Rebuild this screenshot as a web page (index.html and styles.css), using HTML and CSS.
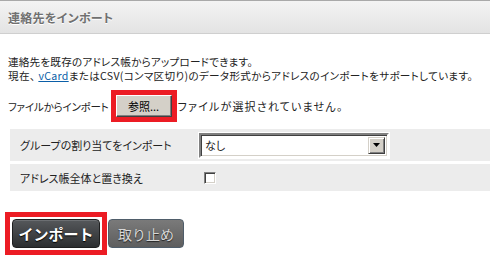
FILE: index.html
```html
<!DOCTYPE html>
<html lang="ja">
<head>
  <meta charset="UTF-8" />
  <title>連絡先をインポート</title>
  <link rel="stylesheet" href="styles.css">
</head>
<body>

<header class="dlg-title"><h1>連絡先をインポート</h1></header>

<!-- intro -->
<div class="intro">
  <p>連絡先を既存のアドレス帳からアップロードできます。</p>
  <p>現在、<a href="#">vCard</a>またはCSV(コンマ区切り)のデータ形式からアドレスのインポートをサポートしています。</p>
</div>

<!-- file picker -->
<div class="file-row">
  <span class="file-label">ファイルからインポート</span>
  <span class="mark"><button class="btn-classic">参照...</button></span>
  <span class="file-none">ファイルが選択されていません。</span>
</div>

<!-- options -->
<div class="opts">
  <div class="opt opt-group">
    <span class="opt-label">グループの割り当てをインポート</span>
    <div class="select-box">
      <span class="select-val">なし</span>
      <span class="select-arrow">
        <svg width="7" height="4" viewBox="0 0 7 4"><path d="M0 0h7L3.5 4z" fill="#000"/></svg>
      </span>
    </div>
  </div>
  <div class="opt opt-replace">
    <span class="opt-label">アドレス帳全体と置き換え</span>
    <input type="checkbox" class="chk">
  </div>
</div>

<!-- actions -->
<div class="actions">
  <span class="mark mark-pad"><button class="btn btn-main">インポート</button></span>
  <button class="btn btn-cancel">取り止め</button>
</div>

</body>
</html>
```

FILE: styles.css
```css
body { margin: 0; font-family: "Noto Sans CJK JP", "Liberation Sans", sans-serif; font-size: 11px; color: #222; background: #fff; }
.dlg-title { height: 32px; border-top: 1px solid #a9a9a9; border-bottom: 1px solid #cfcfcf; background: linear-gradient(#f3f3f3, #e3e3e3); display: flex; align-items: center; }
.dlg-title h1 { margin: 0 0 0 8px; font-size: 12px; font-weight: bold; color: #707070; text-shadow: 0 1px 0 #fff; font-feature-settings: "palt"; letter-spacing: 0.3px; }

.intro { margin: 21px 0 0 8px; font-feature-settings: "palt"; }
.intro p { margin: 0; height: 14px; line-height: 14px; font-size: 10.6px; }
.intro p:first-child { letter-spacing: 0.2px; }
.intro p + p { letter-spacing: 0.3px; }
.intro a { color: #0b5fa8; text-decoration: underline; margin-left: 3px; }

.file-row { display: flex; align-items: center; margin: 7px 0 0 8px; font-feature-settings: "palt"; }
.file-label { font-size: 10.5px; letter-spacing: -0.2px; margin-right: 2px; }
.mark { border: 5px solid #ec1c24; display: inline-flex; }
.mark-pad { padding: 2px; }
.btn-classic { width: 56px; height: 22px; margin: 0; padding: 0; font: inherit; font-size: 11px; color: #000; background: #d4d0c8; border: 1px solid; border-color: #fff #404040 #404040 #fff; box-shadow: inset -1px -1px #808080; }
.file-none { margin-left: 1px; letter-spacing: 1.2px; }

.opts { margin: 7px 0 0 10px; display: flex; flex-direction: column; gap: 3px; font-feature-settings: "palt"; }
.opt { background: #ececec; display: flex; align-items: center; }
.opt-group { height: 32px; }
.opt-replace { height: 27px; }
.opt-label { width: 189px; box-sizing: border-box; padding-left: 10px; }

.select-box { width: 186px; height: 21px; display: flex; align-items: center; background: #fff; border: 2px solid; border-color: #808080 #fff #fff #808080; box-shadow: inset 1px 1px #404040, inset -1px -1px #d4d0c8; outline: 1px solid #fff; }
.select-val { flex: 1; padding-left: 4px; }
.select-arrow { width: 15px; height: 15px; margin-right: 2px; background: #d4d0c8; border: 1px solid; border-color: #d4d0c8 #404040 #404040 #d4d0c8; box-shadow: inset 1px 1px #fff, inset -1px -1px #808080; display: flex; align-items: center; justify-content: center; }
.chk { appearance: none; margin: 0 0 0 5px; width: 12px; height: 12px; background: #fff; border: 1px solid; border-color: #808080 #fff #fff #808080; box-shadow: inset 1px 1px #404040, inset -1px -1px #d4d0c8; }

.actions { display: flex; align-items: center; gap: 1px; margin: 21px 0 0 5px; }
.btn { height: 29px; font-family: inherit; font-size: 14px; border-radius: 4px; padding: 0; }
.btn-main { width: 88px; font-weight: bold; font-size: 15px; color: #fff; background: linear-gradient(#55585b, #2c2e30); border: 1px solid #1e1f20; text-shadow: 0 1px 1px #000; box-shadow: inset 0 1px 0 #6c6f72; }
.btn-cancel { width: 76px; color: #d8d8d8; background: linear-gradient(#7a7a7a, #5e5e5e); border: 1px solid #4f5d6a; text-shadow: 0 1px 1px #222; }
```
